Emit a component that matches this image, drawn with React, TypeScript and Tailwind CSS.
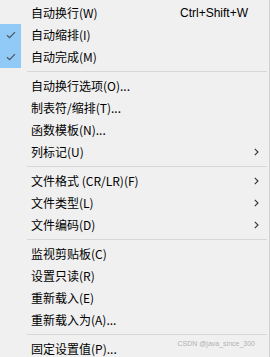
import { Fragment } from "react";

type Item = { label: string; shortcut?: string; checked?: boolean; sub?: boolean };

const groups: Item[][] = [
  [
    { label: "自动换行(W)", shortcut: "Ctrl+Shift+W" },
    { label: "自动缩排(I)", checked: true },
    { label: "自动完成(M)", checked: true },
  ],
  [
    { label: "自动换行选项(O)..." },
    { label: "制表符/缩排(T)..." },
    { label: "函数模板(N)..." },
    { label: "列标记(U)", sub: true },
  ],
  [
    { label: "文件格式 (CR/LR)(F)", sub: true },
    { label: "文件类型(L)", sub: true },
    { label: "文件编码(D)", sub: true },
  ],
  [
    { label: "监视剪贴板(C)" },
    { label: "设置只读(R)" },
    { label: "重新载入(E)" },
    { label: "重新载入为(A)..." },
  ],
  [{ label: "固定设置值(P)..." }],
];

function Check() {
  return (
    <svg width="10" height="8" viewBox="0 0 10 8" fill="none">
      <path d="M1 4.2 L3.6 6.6 L9 1.2" stroke="#4a5560" strokeWidth="1.2" />
    </svg>
  );
}

function Chevron() {
  return (
    <svg width="5" height="8" viewBox="0 0 5 8" fill="none">
      <path d="M0.8 0.8 L4 4 L0.8 7.2" stroke="#333" strokeWidth="1.1" />
    </svg>
  );
}

function Row({ item }: { item: Item }) {
  return (
    <div className="flex h-[22px] items-center">
      <div
        className={`flex h-full w-[21px] items-center justify-center ${item.checked ? "bg-[#91c9f7]" : ""}`}
      >
        {item.checked && <Check />}
      </div>
      <span className="ml-[10px] flex-1 text-[12px] text-black">{item.label}</span>
      {item.shortcut && (
        <span className="mr-[21px] text-[12px] text-black [font-family:'Liberation_Sans',sans-serif]">
          {item.shortcut}
        </span>
      )}
      {item.sub && (
        <span className="mr-[10px] flex items-center">
          <Chevron />
        </span>
      )}
    </div>
  );
}

export default function App() {
  return (
    <div
      className="relative h-[357px] w-[270px] overflow-hidden border-r border-[#cfcfcf] bg-[#f0f0f0] pt-[2px]"
      style={{ fontFamily: "'Microsoft YaHei', 'Noto Sans CJK SC', sans-serif" }}
    >
      {groups.map((g, gi) => (
        <Fragment key={gi}>
          {gi > 0 && (
            <div className="flex h-[7px] items-center pl-[27px] pr-[2px]">
              <div className="h-px w-full bg-[#d7d7d7]" />
            </div>
          )}
          {g.map((it) => (
            <Row key={it.label} item={it} />
          ))}
        </Fragment>
      ))}
      <span className="absolute right-[14px] top-[339px] text-[7px] text-[#b0b0b0] [font-family:'Liberation_Sans',sans-serif]">
        CSDN @java_since_300
      </span>
    </div>
  );
}
